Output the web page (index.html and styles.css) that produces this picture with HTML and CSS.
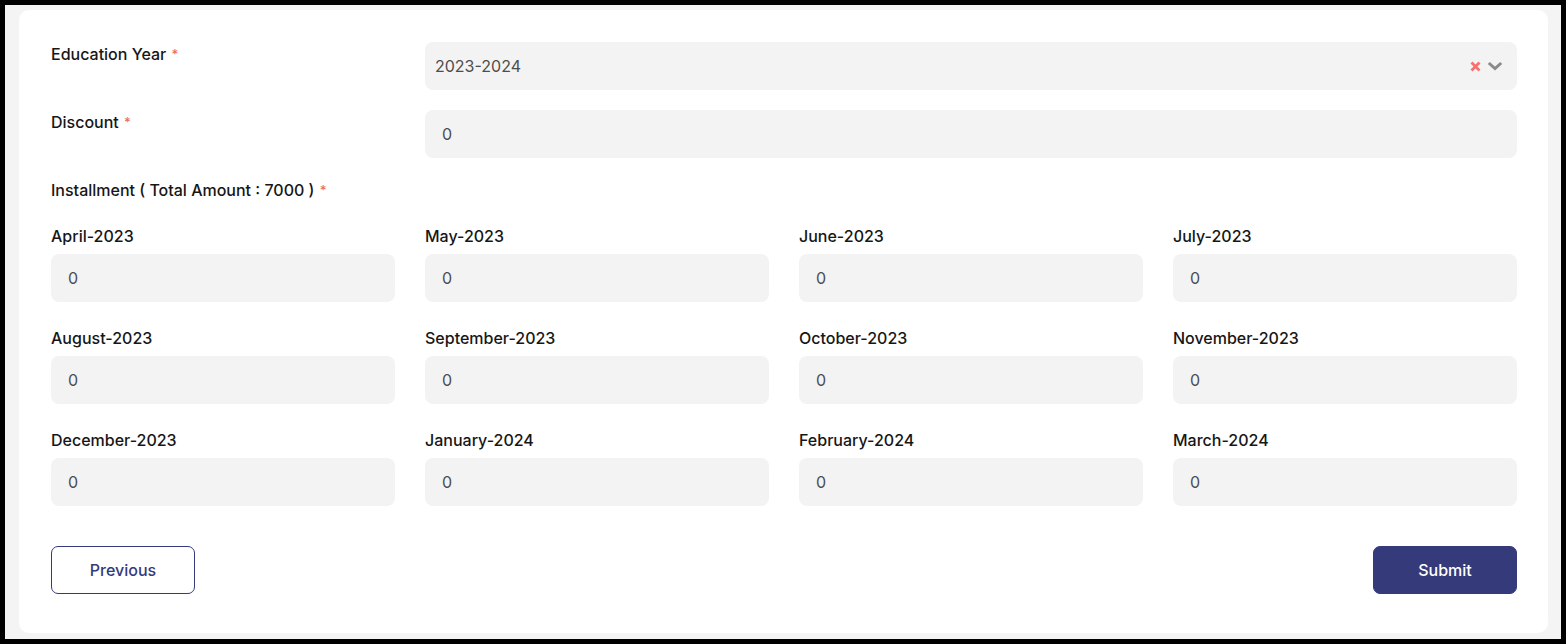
FILE: index.html
```html
<!DOCTYPE html>
<html>
<head>
<meta charset="utf-8">
<link rel="stylesheet" href="styles.css">
</head>
<body>
<div class="frame">
  <form class="card">
    <div class="row">
      <label class="label">Education Year <span class="req">*</span></label>
      <div class="select">
        <span class="select-value">2023-2024</span>
        <span class="select-icons">
          <svg class="clear" width="11" height="11" viewBox="0 0 11 11"><path d="M1.5 1.5 L9.5 9.5 M9.5 1.5 L1.5 9.5" stroke="#f87171" stroke-width="2.8" stroke-linecap="butt"/></svg>
          <svg class="chev" width="16" height="10" viewBox="0 0 16 10"><path d="M1.8 2 L8 7.6 L14.2 2" stroke="#8a8a8a" stroke-width="3" fill="none"/></svg>
        </span>
      </div>
    </div>
    <div class="row">
      <label class="label">Discount <span class="req">*</span></label>
      <input class="input wide" value="0">
    </div>
    <div class="section-label">Installment ( Total Amount : 7000 ) <span class="req">*</span></div>
    <div class="months">
      <div class="field"><label class="label">April-2023</label><input class="input" value="0"></div>
      <div class="field"><label class="label">May-2023</label><input class="input" value="0"></div>
      <div class="field"><label class="label">June-2023</label><input class="input" value="0"></div>
      <div class="field"><label class="label">July-2023</label><input class="input" value="0"></div>
      <div class="field"><label class="label">August-2023</label><input class="input" value="0"></div>
      <div class="field"><label class="label">September-2023</label><input class="input" value="0"></div>
      <div class="field"><label class="label">October-2023</label><input class="input" value="0"></div>
      <div class="field"><label class="label">November-2023</label><input class="input" value="0"></div>
      <div class="field"><label class="label">December-2023</label><input class="input" value="0"></div>
      <div class="field"><label class="label">January-2024</label><input class="input" value="0"></div>
      <div class="field"><label class="label">February-2024</label><input class="input" value="0"></div>
      <div class="field"><label class="label">March-2024</label><input class="input" value="0"></div>
    </div>
    <div class="actions">
      <button type="button" class="btn btn-outline">Previous</button>
      <button type="button" class="btn btn-primary">Submit</button>
    </div>
  </form>
</div>
</body>
</html>
```

FILE: styles.css
```css
* { box-sizing: border-box; }
html, body { margin: 0; padding: 0; }
body {
  width: 1566px;
  height: 644px;
  background: #000;
  padding: 5px;
  font-family: Inter, "Noto Sans", sans-serif;
  color: #111;
}
.frame {
  width: 1556px;
  height: 634px;
  background: #f4f4f4;
  padding: 5px 13px 0 14px;
}
.card {
  background: #fff;
  border-radius: 10px;
  height: 623px;
  padding: 32px 31px 0 32px;
  display: flex;
  flex-direction: column;
}
.row {
  display: grid;
  grid-template-columns: 344px 1fr;
  column-gap: 30px;
  margin-bottom: 20px;
}
.label {
  display: block;
  font-size: 16px;
  font-weight: 500;
  line-height: 24px;
  color: #161616;
}
.req {
  color: #f06a6a;
  font-size: 13px;
  margin-left: 1px;
  vertical-align: 1px;
}
.select {
  height: 48px;
  background: #f3f3f3;
  border-radius: 8px;
  display: flex;
  align-items: center;
  justify-content: space-between;
  padding: 0 14px 0 10px;
}
.select-value {
  font-size: 16px;
  color: #4d4d4d;
}
.select-icons {
  display: flex;
  align-items: center;
  gap: 6px;
}
.input {
  display: block;
  width: 100%;
  height: 48px;
  border: none;
  outline: none;
  background: #f3f3f3;
  border-radius: 8px;
  padding: 0 17px;
  font-family: Inter, "Noto Sans", sans-serif;
  font-size: 16px;
  font-weight: 400;
  color: #4d4d4d;
}
.section-label {
  font-size: 16px;
  font-weight: 500;
  line-height: 24px;
  margin-bottom: 22px;
  color: #161616;
}
.months {
  display: grid;
  grid-template-columns: repeat(4, 344px);
  column-gap: 30px;
  row-gap: 24px;
}
.field .label { margin-bottom: 6px; }
.actions {
  display: flex;
  justify-content: space-between;
  margin-top: 40px;
}
.btn {
  width: 144px;
  height: 48px;
  border-radius: 7px;
  font-family: Inter, "Noto Sans", sans-serif;
  font-size: 16px;
  font-weight: 500;
  cursor: pointer;
}
.btn-outline {
  background: #fff;
  border: 1px solid #353a7b;
  color: #353a7b;
}
.btn-primary {
  background: #353a7b;
  border: 1px solid #353a7b;
  color: #fff;
}
```
